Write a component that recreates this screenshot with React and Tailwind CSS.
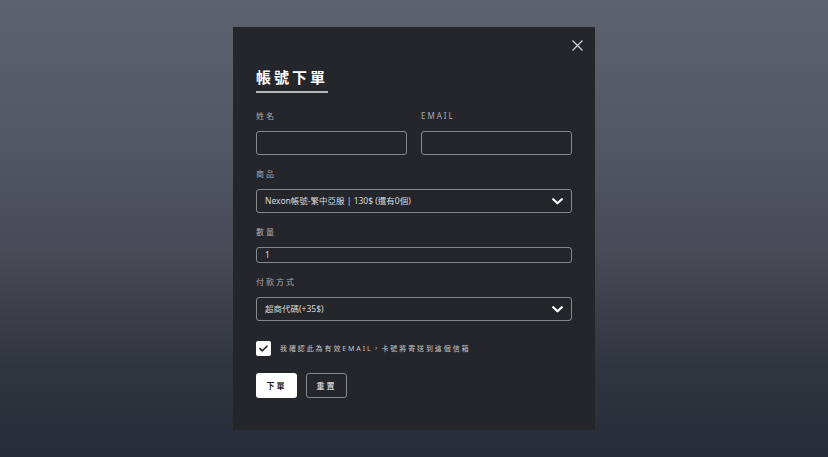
import React from "react";

const FONT = { fontFamily: '"Noto Sans", "Noto Sans CJK TC", sans-serif' };

function Label({ children }) {
  return (
    <div className="text-[8px] leading-[12px] tracking-[2px] text-[#a9abb0]">{children}</div>
  );
}

function Chevron() {
  return (
    <svg width="11" height="7" viewBox="0 0 11 7" className="shrink-0">
      <path d="M1.2 1.2 L5.5 5.3 L9.8 1.2" fill="none" stroke="#ffffff" strokeWidth="2.2" strokeLinecap="round" strokeLinejoin="round" />
    </svg>
  );
}

export default function App() {
  return (
    <div
      className="w-full h-[457px] overflow-hidden bg-[linear-gradient(180deg,#5c626e_0%,#535865_30%,#484a56_55%,#31353f_80%,#262c38_100%)] pt-[27px]"
      style={FONT}
    >
      <div className="relative mx-auto w-[362px] h-[403px] bg-[#25262b] px-[23px] pt-[39px]">
        <button className="absolute right-[12px] top-[13px] w-[11px] h-[11px]">
          <svg width="11" height="11" viewBox="0 0 11 11">
            <path d="M0.5 0.5 L10.5 10.5 M10.5 0.5 L0.5 10.5" stroke="#d4d5d8" strokeWidth="1.2" />
          </svg>
        </button>

        <div className="flex flex-col">
          <div className="w-fit text-[15px] leading-[22px] font-bold tracking-[3px] text-white pb-[3px] border-b-2 border-[#b5b6b9]">
            帳號下單
          </div>

          <div className="mt-[17px] flex gap-[14px]">
            <div className="flex-1 flex flex-col gap-[9px]">
              <Label>姓名</Label>
              <div className="h-[24px] rounded-[3px] border-[1.5px] border-[#868990]" />
            </div>
            <div className="flex-1 flex flex-col gap-[9px]">
              <Label>EMAIL</Label>
              <div className="h-[24px] rounded-[3px] border-[1.5px] border-[#868990]" />
            </div>
          </div>

          <div className="mt-[13px] flex flex-col gap-[9px]">
            <Label>商品</Label>
            <div className="h-[24px] rounded-[3px] border-[1.5px] border-[#868990] flex items-center justify-between pl-[8px] pr-[8px]">
              <span className="text-[8.5px] text-[#d8d9dc]">Nexon帳號-繁中亞服 | 130$ (還有0個)</span>
              <Chevron />
            </div>
          </div>

          <div className="mt-[13px] flex flex-col gap-[9px]">
            <Label>數量</Label>
            <div className="h-[16px] rounded-[3px] border-[1.5px] border-[#868990] flex items-center pl-[8px]">
              <span className="text-[8.5px] text-[#d8d9dc]">1</span>
            </div>
          </div>

          <div className="mt-[13px] flex flex-col gap-[9px]">
            <Label>付款方式</Label>
            <div className="h-[24px] rounded-[3px] border-[1.5px] border-[#868990] flex items-center justify-between pl-[8px] pr-[8px]">
              <span className="text-[8.5px] text-[#d8d9dc]">超商代碼(+35$)</span>
              <Chevron />
            </div>
          </div>

          <div className="mt-[20px] flex items-center gap-[9px]">
            <div className="w-[15px] h-[15px] rounded-[2px] bg-white flex items-center justify-center">
              <svg width="9" height="7" viewBox="0 0 9 7">
                <path d="M1 3.6 L3.4 5.8 L8 1.2" fill="none" stroke="#1d1e22" strokeWidth="1.6" strokeLinecap="round" strokeLinejoin="round" />
              </svg>
            </div>
            <span className="text-[7px] leading-[12px] tracking-[1.9px] text-[#c4c6ca]">
              我確認此為有效EMAIL，卡號將寄送到這個信箱
            </span>
          </div>

          <div className="mt-[17px] flex gap-[9px]">
            <button className="w-[41px] h-[25px] rounded-[3px] bg-white text-[#1d1e22] text-[8px] tracking-[2px] font-bold flex items-center justify-center">
              下單
            </button>
            <button className="w-[41px] h-[25px] rounded-[3px] border-[1.5px] border-[#868990] text-[#c4c6ca] text-[8px] tracking-[2px] font-bold flex items-center justify-center">
              重置
            </button>
          </div>
        </div>
      </div>
    </div>
  );
}
